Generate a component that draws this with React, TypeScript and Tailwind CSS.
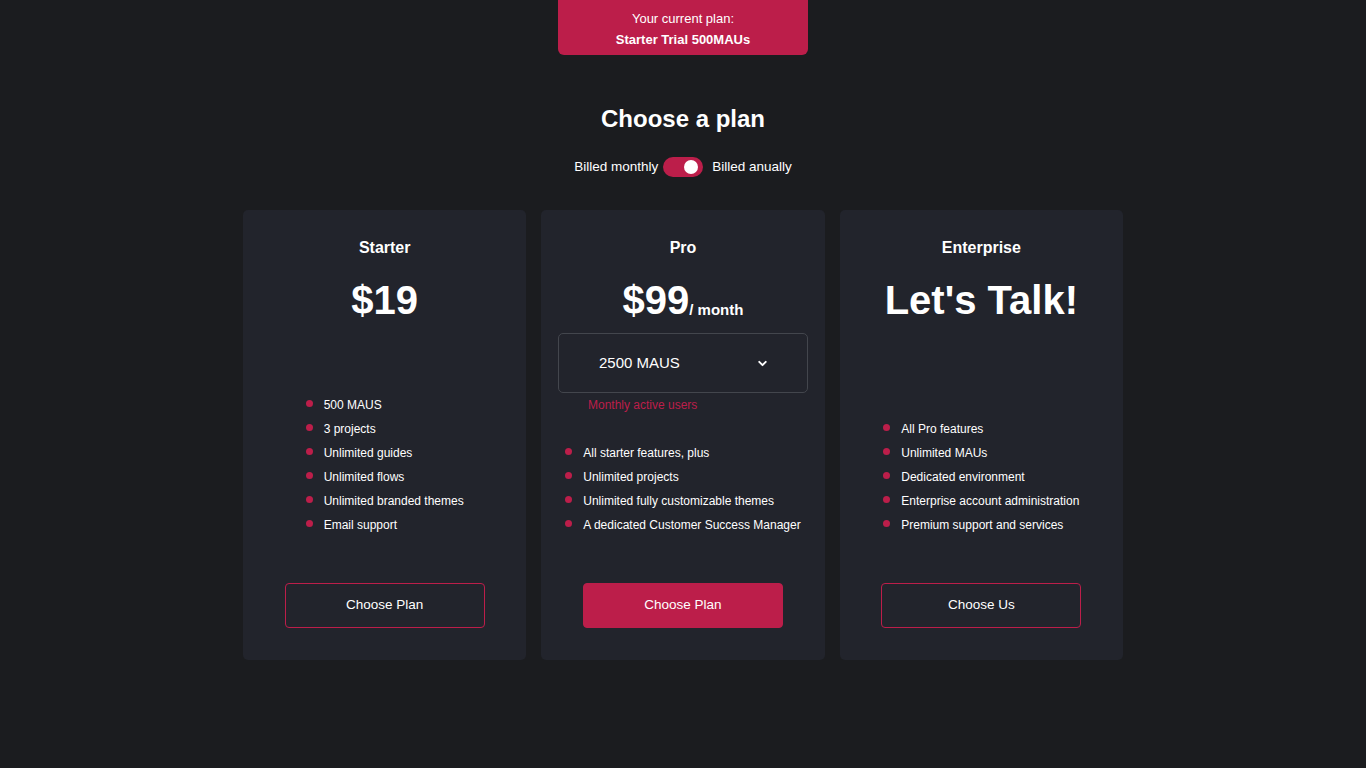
import React from "react";
import { ChevronDown } from "lucide-react";

const plans = [
	{
		name: "Starter",
		price: "$19",
		features: [
			"500 MAUS",
			"3 projects",
			"Unlimited guides",
			"Unlimited flows",
			"Unlimited branded themes",
			"Email support",
		],
		cta: "Choose Plan",
		primary: false,
		select: false,
		perMonth: false,
	},
	{
		name: "Pro",
		price: "$99",
		features: [
			"All starter features, plus",
			"Unlimited projects",
			"Unlimited fully customizable themes",
			"A dedicated Customer Success Manager",
		],
		cta: "Choose Plan",
		primary: true,
		select: true,
		perMonth: true,
	},
	{
		name: "Enterprise",
		price: "Let's Talk!",
		features: [
			"All Pro features",
			"Unlimited MAUs",
			"Dedicated environment",
			"Enterprise account administration",
			"Premium support and services",
		],
		cta: "Choose Us",
		primary: false,
		select: false,
		perMonth: false,
	},
];

const App = () => {
	return (
		<div
			className="min-h-screen w-full bg-[#1b1c1f] text-white flex flex-col items-center"
			style={{ fontFamily: '"Liberation Sans", Arial, sans-serif' }}>
			{/* Current plan banner */}
			<div className="w-[250px] h-[55px] bg-[#bc1e4a] rounded-b-[6px] flex flex-col items-center pt-[8px] text-[13px] leading-[21px]">
				<span>Your current plan:</span>
				<span className="font-bold">Starter Trial 500MAUs</span>
			</div>

			{/* Header */}
			<h1 className="mt-[50px] text-[24px] leading-[28px] font-bold">Choose a plan</h1>
			<div className="mt-[24px] flex items-center text-[13.5px] leading-[20px]">
				<span>Billed monthly</span>
				<div className="ml-[5px] mr-[9px] w-[40px] h-[20px] rounded-full bg-[#bc1e4a] flex items-center justify-end pr-[5px]">
					<div className="w-[14px] h-[14px] rounded-full bg-white" />
				</div>
				<span>Billed anually</span>
			</div>

			{/* Cards */}
			<div className="mt-[33px] w-[880px] grid grid-cols-3 gap-[15px]">
				{plans.map((plan) => (
					<div
						key={plan.name}
						className="h-[450px] rounded-[5px] bg-[#22242c] flex flex-col items-center pt-[28px] pb-[32px]">
						<h3 className="text-[16px] leading-[20px] font-bold">{plan.name}</h3>
						<div className="mt-[18px] flex items-end">
							<span className="text-[40px] leading-[48px] font-bold">{plan.price}</span>
							{plan.perMonth && (
								<span className="text-[15px] leading-[20px] font-bold mb-[4px]">/ month</span>
							)}
						</div>

						{plan.select && (
							<div className="w-[250px] mt-[9px]">
								<div className="h-[60px] rounded-[5px] border border-[#43464d] flex items-center justify-between pl-[40px] pr-[38px]">
									<span className="text-[15px]">2500 MAUS</span>
									<ChevronDown size={13} strokeWidth={3.5} />
								</div>
								<p className="mt-[4px] pl-[30px] text-[12px] leading-[16px] text-[#bc1e4a]">
									Monthly active users
								</p>
							</div>
						)}

						{/* Features */}
						<ul className="mt-auto">
							{plan.features.map((f) => (
								<li key={f} className="flex items-center text-[12px] leading-[24px]">
									<span className="w-[7px] h-[7px] rounded-full bg-[#bc1e4a] mr-[11px] mb-[4px]" />
									{f}
								</li>
							))}
						</ul>

						<button
							className={
								plan.primary
									? "mt-[46px] w-[200px] h-[45px] rounded-[4px] bg-[#bc1e4a] border border-[#bc1e4a] text-[13.5px] text-white"
									: "mt-[46px] w-[200px] h-[45px] rounded-[4px] border border-[#bc1e4a] text-[13.5px] text-white"
							}>
							{plan.cta}
						</button>
					</div>
				))}
			</div>
		</div>
	);
};

export default App;
